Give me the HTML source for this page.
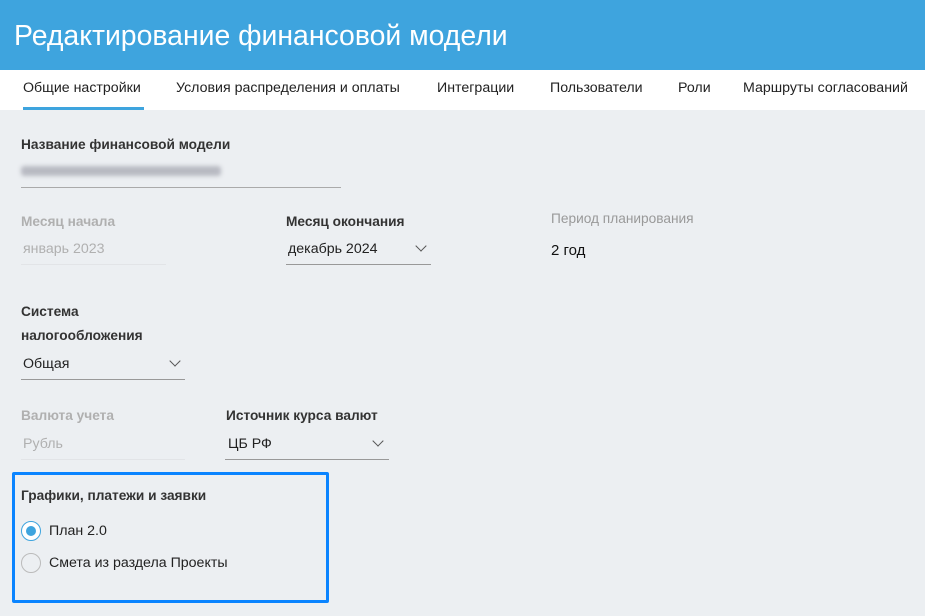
<!DOCTYPE html>
<html><head><meta charset="utf-8"><style>
*{margin:0;padding:0;box-sizing:border-box}
body{width:925px;height:616px;overflow:hidden;background:#eceff2;font-family:"Liberation Sans","DejaVu Sans",sans-serif;position:relative;color:#222}
.hdr{position:absolute;left:0;top:0;width:925px;height:70px;background:#3ea4de;color:#fff;font-size:28.4px;padding:20px 0 0 14px}
.tabs{position:absolute;left:0;top:70px;width:925px;height:40px;background:#fff}
.tab{position:absolute;top:10px;font-size:14.2px;color:#222}
.ul{position:absolute;left:23px;top:107px;width:121px;height:3px;background:#3ea4de}
.a{position:absolute;white-space:nowrap}
.lb{font-size:13.7px;font-weight:bold;color:#333}
.v{font-size:14.2px;color:#222}
.a.dis{color:#b0b0b0}
.line{position:absolute;height:1px;background:#999}
.chev{position:absolute;width:8px;height:8px;border-right:1.5px solid #555;border-bottom:1.5px solid #555;transform:rotate(45deg)}
.box{position:absolute;left:12px;top:472px;width:317px;height:131px;border:3px solid #0a84ff;border-radius:2px}
.rad{position:absolute;width:20px;height:20px;border-radius:50%;border:1.5px solid #bbb;background:transparent}
</style></head><body>
<div class="hdr">Редактирование финансовой модели</div>
<div class="tabs">
<div class="tab" style="left:23px">Общие настройки</div>
<div class="tab" style="left:176px">Условия распределения и оплаты</div>
<div class="tab" style="left:437px">Интеграции</div>
<div class="tab" style="left:550px">Пользователи</div>
<div class="tab" style="left:678px">Роли</div>
<div class="tab" style="left:743px">Маршруты согласований</div>
</div>
<div class="ul"></div>

<div class="a lb" style="left:21px;top:137px">Название финансовой модели</div>
<div class="a" style="left:21px;top:166px;width:200px;height:10px;background:#b8bac2;filter:blur(2px);border-radius:3px"></div>
<div class="line" style="left:21px;top:187px;width:320px;background:#aaa"></div>

<div class="a lb dis" style="left:21px;top:214px">Месяц начала</div>
<div class="a v dis" style="left:23px;top:241px">январь 2023</div>
<div class="line" style="left:21px;top:264px;width:145px;background:#e2e4e7"></div>

<div class="a lb" style="left:286px;top:214px">Месяц окончания</div>
<div class="a v" style="left:288px;top:241px">декабрь 2024</div>
<div class="chev" style="left:417px;top:242px"></div>
<div class="line" style="left:286px;top:264px;width:145px"></div>

<div class="a" style="left:551px;top:211px;font-size:13.7px;color:#999">Период планирования</div>
<div class="a" style="left:551px;top:242px;font-size:15px;color:#111">2 год</div>

<div class="a lb" style="left:21px;top:304px">Система</div>
<div class="a lb" style="left:21px;top:328px">налогообложения</div>
<div class="a v" style="left:23px;top:356px">Общая</div>
<div class="chev" style="left:171px;top:357px"></div>
<div class="line" style="left:21px;top:379px;width:164px"></div>

<div class="a lb dis" style="left:21px;top:408px">Валюта учета</div>
<div class="a v dis" style="left:23px;top:436px">Рубль</div>
<div class="line" style="left:21px;top:459px;width:164px;background:#e2e4e7"></div>

<div class="a lb" style="left:226px;top:408px">Источник курса валют</div>
<div class="a v" style="left:228px;top:436px">ЦБ РФ</div>
<div class="chev" style="left:374px;top:437px"></div>
<div class="line" style="left:225px;top:459px;width:164px"></div>

<div class="box"></div>
<div class="a lb" style="left:21px;top:488px">Графики, платежи и заявки</div>
<div class="rad" style="left:21px;top:521px;border-color:#3ea4de;background:#fff"><div style="position:absolute;left:3.5px;top:3.5px;width:10px;height:10px;border-radius:50%;background:#3ea4de"></div></div>
<div class="a v" style="left:49px;top:523px">План 2.0</div>
<div class="rad" style="left:21px;top:553px"></div>
<div class="a v" style="left:49px;top:555px">Смета из раздела Проекты</div>
</body></html>
